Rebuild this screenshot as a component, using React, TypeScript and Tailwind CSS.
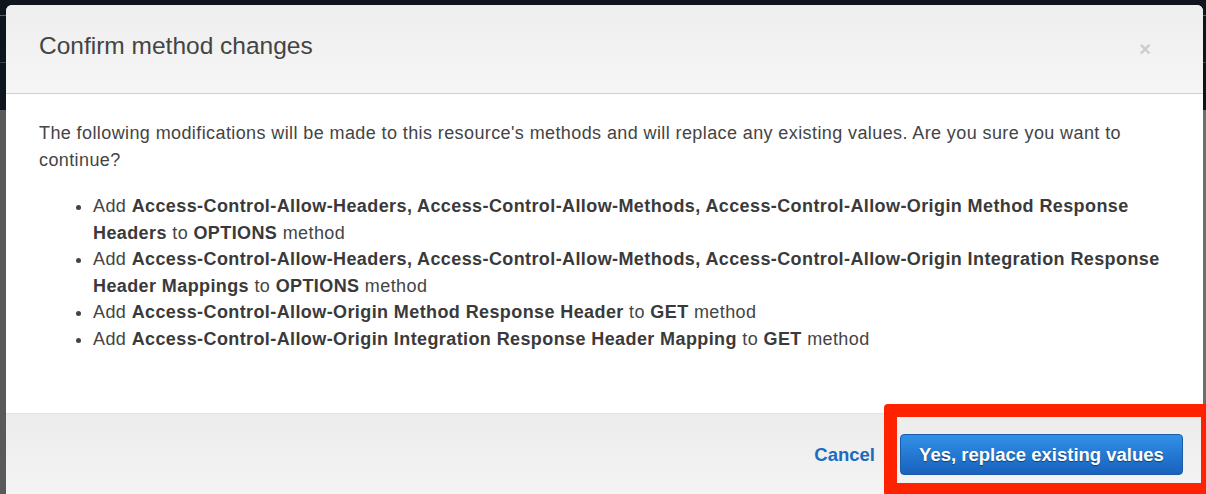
export default function App() {
  const items: { parts: [string, boolean][] }[] = [
    {
      parts: [
        ["Add ", false],
        ["Access-Control-Allow-Headers, Access-Control-Allow-Methods, Access-Control-Allow-Origin Method Response Headers", true],
        [" to ", false],
        ["OPTIONS", true],
        [" method", false],
      ],
    },
    {
      parts: [
        ["Add ", false],
        ["Access-Control-Allow-Headers, Access-Control-Allow-Methods, Access-Control-Allow-Origin Integration Response Header Mappings", true],
        [" to ", false],
        ["OPTIONS", true],
        [" method", false],
      ],
    },
    {
      parts: [
        ["Add ", false],
        ["Access-Control-Allow-Origin Method Response Header", true],
        [" to ", false],
        ["GET", true],
        [" method", false],
      ],
    },
    {
      parts: [
        ["Add ", false],
        ["Access-Control-Allow-Origin Integration Response Header Mapping", true],
        [" to ", false],
        ["GET", true],
        [" method", false],
      ],
    },
  ];

  return (
    <div
      className="relative w-[1206px] h-[494px] overflow-hidden bg-[#646464]"
      style={{ fontFamily: '"Liberation Sans", Arial, sans-serif' }}
    >
      {/* page behind the backdrop */}
      <div className="h-[110px] bg-[#0f151c] flex flex-col">
        <div className="h-[15px]" />
        <div className="h-px bg-[#8a5a14]" />
        <div className="h-[46px]" />
        <div className="h-px bg-[#3a4048]" />
      </div>
      <div className="h-[384px] bg-gradient-to-r from-[#5a5a5a] to-[#6e6e6e]" />

      {/* modal */}
      <div className="absolute left-[6px] top-[5px] w-[1197px] rounded-t-[6px] overflow-hidden bg-white">
        <div className="h-[89px] flex items-center justify-between pl-[33px] pr-[52px] bg-gradient-to-b from-[#eeeeee] to-[#f6f6f6] border-b border-[#cfcfcf]">
          <h1 className="text-[24.5px] text-[#444] pb-[6px]">Confirm method changes</h1>
          <span className="text-[20px] font-bold text-[#cccccc] leading-none">×</span>
        </div>
        <div className="h-[319px] px-[33px] pt-[26px] text-[18px] tracking-[0.4px] leading-[26.5px] text-[#444]">
          <p className="mb-[20px]">
            The following modifications will be made to this resource's methods and will replace any existing values. Are you sure you want to continue?
          </p>
          <ul className="list-disc pl-[54px]">
            {items.map((it, i) => (
              <li key={i}>
                {it.parts.map(([t, b], j) =>
                  b ? (
                    <b key={j} className="font-bold text-[#3a3a3a]">{t}</b>
                  ) : (
                    <span key={j}>{t}</span>
                  )
                )}
              </li>
            ))}
          </ul>
        </div>
        <div className="h-[90px] border-t border-[#e2e2e2] bg-gradient-to-b from-[#ececec] to-[#f5f5f5] flex items-start justify-end gap-[25px] pr-[20px] pt-[20px]">
          <span className="text-[18.5px] font-bold text-[#1a6cc0] mt-[7px]">Cancel</span>
          <button className="w-[283px] h-[41px] rounded-[4px] border border-[#1b5ba8] bg-gradient-to-b from-[#3290e8] to-[#1862bd] text-white text-[18.5px] font-bold [text-shadow:0_1px_1px_rgba(0,0,0,0.45)]">
            Yes, replace existing values
          </button>
        </div>
      </div>

      {/* annotation box */}
      <div className="absolute left-[884px] top-[404px] w-[330px] h-[92px] border-[13px] border-[#ff2200] rounded-[4px]" />
    </div>
  );
}
